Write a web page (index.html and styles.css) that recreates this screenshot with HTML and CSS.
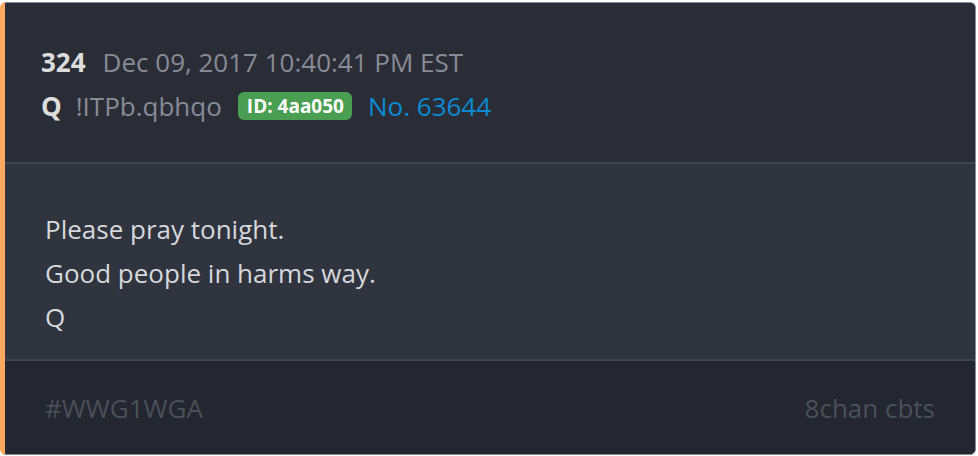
FILE: index.html
```html
<!DOCTYPE html>
<html lang="en">
<head>
<meta charset="utf-8">
<title>Post 324</title>
<link rel="stylesheet" href="styles.css">
</head>
<body>
<article class="card">
  <header class="card-head">
    <div class="meta-row">
      <span class="post-num">324</span>
      <span class="post-date">Dec 09, 2017 10:40:41 PM EST</span>
    </div>
    <div class="meta-row">
      <span class="author">Q</span>
      <span class="trip">!ITPb.qbhqo</span>
      <span class="id-badge">ID: 4aa050</span>
      <a class="post-link" href="#">No. 63644</a>
    </div>
  </header>
  <section class="card-body">
    <p>Please pray tonight.</p>
    <p>Good people in harms way.</p>
    <p>Q</p>
  </section>
  <footer class="card-foot">
    <span>#WWG1WGA</span>
    <span>8chan cbts</span>
  </footer>
</article>
</body>
</html>
```
FILE: styles.css
```css
html, body {
  margin: 0;
  padding: 0;
  background: #ffffff;
}
body {
  padding: 2px 2px 1px 0;
  font-family: "Open Sans", "Noto Sans", sans-serif;
}
.card {
  box-sizing: border-box;
  height: 453px;
  border: 1px solid #868b95;
  border-left: 5px solid #ffa95e;
  border-radius: 6px;
  overflow: hidden;
  display: flex;
  flex-direction: column;
  background: #2a2d36;
}
.card-head {
  background: #2a2d36;
  padding: 37px 36px 0;
  height: 161px;
  box-sizing: border-box;
  border-bottom: 2px solid #40444e;
}
.meta-row {
  display: flex;
  align-items: center;
  height: 44px;
  font-size: 26px;
}
.post-num {
  font-weight: 700;
  color: #dcdcdc;
  margin-right: 17px;
}
.post-date {
  color: #878b96;
}
.author {
  font-weight: 700;
  color: #dcdcdc;
  margin-right: 14px;
}
.trip {
  color: #878b96;
  margin-right: 16px;
}
.id-badge {
  background: #4a9e52;
  color: #ffffff;
  font-weight: 700;
  font-size: 19px;
  border-radius: 6px;
  padding: 0 8px 0 9px;
  height: 28px;
  line-height: 28px;
  margin-right: 16px;
}
.post-link {
  color: #0a8ad2;
  text-decoration: none;
}
.card-body {
  background: #2f343e;
  padding: 43px 40px 0;
  height: 197px;
  box-sizing: border-box;
  border-bottom: 2px solid #40444e;
}
.card-body p {
  margin: 0;
  font-size: 26px;
  line-height: 44px;
  color: #d6d8dc;
}
.card-foot {
  flex: 1;
  background: #24272f;
  display: flex;
  justify-content: space-between;
  align-items: center;
  padding: 0 40px;
  font-size: 26px;
  color: #4a4f5a;
}
```
